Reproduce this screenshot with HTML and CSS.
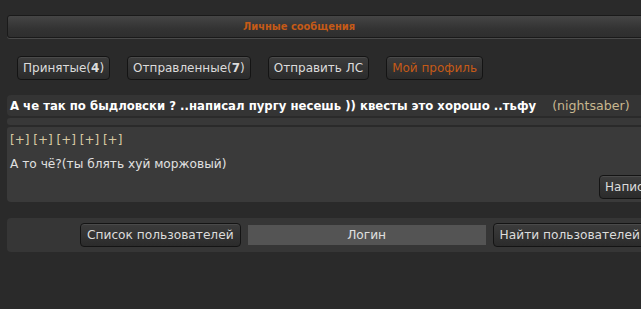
FILE: index.html
```html
<!DOCTYPE html>
<html lang="ru">
<head>
<meta charset="utf-8">
<title>Личные сообщения</title>
<link rel="stylesheet" href="styles.css">
</head>
<body>
<div class="page">
  <div class="head"><span class="head-title">Личные сообщения</span></div>
  <div class="tabs">
    <button class="btn">Принятые(<b>4</b>)</button>
    <button class="btn">Отправленные(<b>7</b>)</button>
    <button class="btn">Отправить ЛС</button>
    <button class="btn btn-active">Мой профиль</button>
  </div>
  <div class="subject">А че так по быдловски ? ..написал пургу несешь )) квесты это хорошо ..тьфу <span class="author">(nightsaber)</span></div>
  <div class="strip"></div>
  <div class="msg">
    <div class="plus">[+] [+] [+] [+] [+]</div>
    <div class="msg-text">А то чё?(ты блять хуй моржовый)</div>
    <div class="msg-actions"><button class="btn">Написать</button></div>
  </div>
  <div class="search">
    <button class="btn btn-lg">Список пользователей</button>
    <div class="login">Логин</div>
    <button class="btn btn-lg">Найти пользователей</button>
  </div>
</div>
</body>
</html>
```
FILE: styles.css
```css
html, body {
  margin: 0;
  padding: 0;
  background: #2a2a2a;
  overflow: hidden;
}
body {
  font-family: "DejaVu Sans", Verdana, sans-serif;
  font-size: 12px;
  color: #dcdcdc;
}
.page {
  width: 760px;
  padding: 15px 0 0 7px;
}
.head {
  height: 21px;
  border: 1px solid #1a1a1a;
  border-radius: 3px;
  background: linear-gradient(#454545, #333 60%, #2e2e2e);
  box-shadow: 0 1px 0 #4a4a4a;
  display: flex;
  align-items: center;
  padding-left: 235px;
}
.head-title {
  font-family: "DejaVu Sans Condensed", "DejaVu Sans", sans-serif;
  font-stretch: condensed;
  font-weight: bold;
  font-size: 11px;
  color: #c55a17;
}
.tabs {
  display: flex;
  gap: 17px;
  padding: 18px 0 0 10px;
  height: 24px;
}
.btn {
  font-family: "DejaVu Sans", Verdana, sans-serif;
  font-size: 12px;
  color: #dcdcdc;
  background: linear-gradient(#3c3c3c, #2b2b2b);
  border: 1px solid #141414;
  border-radius: 4px;
  padding: 0 5px;
  height: 24px;
  line-height: 22px;
  box-shadow: inset 0 1px 0 #4a4a4a;
  cursor: pointer;
}
.btn b { font-weight: bold; }
.btn-active { color: #c55a17; }
.subject {
  margin-top: 15px;
  height: 21px;
  line-height: 21px;
  background: #343434;
  border-radius: 4px 0 0 4px;
  padding-left: 3px;
  font-family: "DejaVu Sans", Verdana, sans-serif;
  font-weight: bold;
  font-size: 11.7px;
  color: #fff;
  white-space: nowrap;
}
.author {
  font-weight: normal;
  font-size: 12.6px;
  color: #c8b78f;
  margin-left: 12px;
}
.strip {
  margin-top: 2px;
  height: 7px;
  background: #383838;
  border-radius: 3px 0 0 3px;
}
.msg {
  margin-top: 2px;
  height: 75px;
  background: #3a3a3a;
  border-radius: 3px 0 0 4px;
  padding: 4px 0 0 3px;
  box-sizing: border-box;
}
.plus {
  color: #d8c9a2;
  height: 18px;
  line-height: 18px;
}
.msg-text {
  margin-top: 7px;
  line-height: 16px;
  font-size: 12.2px;
  color: #e0e0e0;
}
.msg-actions {
  padding: 3px 0 0 589px;
}
.search {
  margin-top: 16px;
  height: 34px;
  background: #363636;
  border-radius: 4px 0 0 4px;
  display: flex;
  align-items: center;
  gap: 7px;
  padding-left: 73px;
}
.btn-lg {
  font-size: 12.2px;
  padding: 0 6px;
}
.login {
  width: 238px;
  height: 20px;
  line-height: 20px;
  background: #545454;
  text-align: center;
  font-size: 12.2px;
  color: #e0e0e0;
}
```
